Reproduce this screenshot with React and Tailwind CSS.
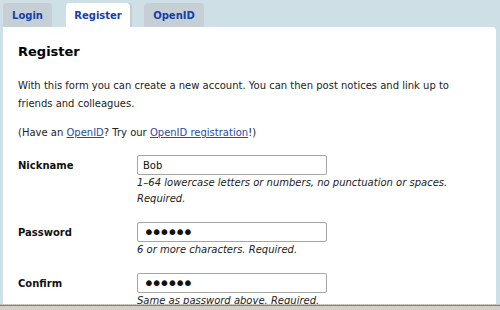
import React from 'react';

const tabs = [
    { label: 'Login', width: 'w-[49px]', active: false },
    { label: 'Register', width: 'w-[64px]', active: true },
    { label: 'OpenID', width: 'w-[60px]', active: false },
];

function FormRow({ label, value, type, hint }) {
    return (
        <div className="grid grid-cols-[119px_1fr] mb-[15px]">
            <label className="h-[20px] flex items-center font-bold text-[#111]">{label}</label>
            <div>
                <input
                    type={type}
                    defaultValue={value}
                    className={`block w-[190px] h-[20px] px-[5px] border border-[#a5a5a5] rounded-[2px] bg-white text-[#111] outline-none ${type === 'password' ? 'text-[20px] tracking-[-4px] leading-none' : 'text-[10px]'}`}
                />
                <p className="italic leading-[16px] text-[#222] pr-[10px]">{hint}</p>
            </div>
        </div>
    );
}

export default function App() {
    return (
        <div className="w-[500px] h-[310px] flex flex-col overflow-hidden bg-[#cedfe6] font-['DejaVu_Sans',sans-serif] text-[10px]">
            <div className="flex-1 min-h-0 flex flex-col pl-[3px] pr-[4px] pt-[3px]">
                <nav className="flex h-[24px] gap-[14px]">
                    {tabs.map((t) => (
                        <a
                            key={t.label}
                            href="#"
                            className={`${t.width} flex items-center justify-center rounded-t-[4px] text-[10px] font-bold text-[#1240ad] ${t.active ? 'bg-white shadow-[2px_0_0_#c4ccd2]' : 'bg-[#c6cfd5]'}`}
                        >
                            {t.label}
                        </a>
                    ))}
                </nav>
                <div className="flex-1 min-h-0 overflow-hidden bg-white rounded-tr-[4px] px-[15px] pt-[15px]">
                    <h1 className="text-[13px] leading-[20px] font-bold text-black">Register</h1>
                    <p className="mt-[15px] leading-[18px] text-[#222]">
                        With this form you can create a new account. You can then post notices and link up to friends and colleagues.
                    </p>
                    <p className="mt-[11px] leading-[18px] text-[#222]">
                        (Have an <a href="#" className="text-[#2a4aa8] underline">OpenID</a>? Try our{' '}
                        <a href="#" className="text-[#2a4aa8] underline">OpenID registration</a>!)
                    </p>
                    <form className="mt-[13px]">
                        <FormRow
                            label="Nickname"
                            value="Bob"
                            type="text"
                            hint="1–64 lowercase letters or numbers, no punctuation or spaces. Required."
                        />
                        <FormRow label="Password" value="secret" type="password" hint="6 or more characters. Required." />
                        <FormRow label="Confirm" value="secret" type="password" hint="Same as password above. Required." />
                    </form>
                </div>
            </div>
            <div className="h-[6px] border-t border-dotted border-[#bdbdbd] bg-[#d4d0c8] shadow-[inset_0_1px_0_#7f7f7f]" />
        </div>
    );
}
